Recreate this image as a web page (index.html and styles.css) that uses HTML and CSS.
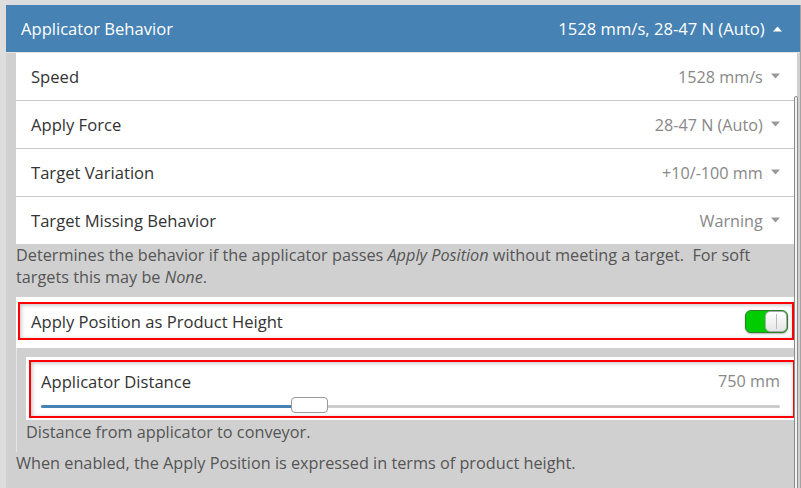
FILE: index.html
```html
<!DOCTYPE html>
<html>
<head>
<meta charset="utf-8">
<link rel="stylesheet" href="styles.css">
</head>
<body>
<div class="panel">
  <div class="header">
    <span class="title">Applicator Behavior</span>
    <span class="summary">1528 mm/s, 28-47 N (Auto) <svg class="caret" width="9" height="6" viewBox="0 0 9 6"><path d="M0 5.5 L4.5 0.5 L9 5.5 Z" fill="#fff"/></svg></span>
  </div>
  <div class="content">
    <div class="rows">
      <div class="row"><span class="label">Speed</span><span class="value">1528 mm/s <svg class="caret" width="9" height="6" viewBox="0 0 9 6"><path d="M0 0.5 L9 0.5 L4.5 5.5 Z" fill="#999"/></svg></span></div>
      <div class="row"><span class="label">Apply Force</span><span class="value">28-47 N (Auto) <svg class="caret" width="9" height="6" viewBox="0 0 9 6"><path d="M0 0.5 L9 0.5 L4.5 5.5 Z" fill="#999"/></svg></span></div>
      <div class="row"><span class="label">Target Variation</span><span class="value">+10/-100 mm <svg class="caret" width="9" height="6" viewBox="0 0 9 6"><path d="M0 0.5 L9 0.5 L4.5 5.5 Z" fill="#999"/></svg></span></div>
      <div class="row last"><span class="label">Target Missing Behavior</span><span class="value">Warning <svg class="caret" width="9" height="6" viewBox="0 0 9 6"><path d="M0 0.5 L9 0.5 L4.5 5.5 Z" fill="#999"/></svg></span></div>
    </div>
    <p class="desc">Determines the behavior if the applicator passes <em>Apply Position</em> without meeting a target.&nbsp; For soft targets this may be <em>None</em>.</p>
    <div class="card toggle-card">
      <div class="hl toggle-row">
        <span class="label">Apply Position as Product Height</span>
        <span class="toggle"><span class="knob"></span></span>
      </div>
    </div>
    <div class="nested">
      <div class="card slider-card">
        <div class="hl slider-box">
          <div class="slider-head"><span class="label">Applicator Distance</span><span class="value">750 mm</span></div>
          <div class="track"><div class="fill" style="width: 34%"></div><div class="thumb" style="left: 34%"></div></div>
        </div>
      </div>
      <p class="desc nested-desc">Distance from applicator to conveyor.</p>
    </div>
    <p class="desc">When enabled, the Apply Position is expressed in terms of product height.</p>
  </div>
  <div class="scrollbar"></div>
</div>
</body>
</html>
```

FILE: styles.css
```css
html, body {
  margin: 0;
  padding: 0;
  height: 100%;
  overflow: hidden;
}
body {
  background: #dddddd;
  font-family: "Open Sans", "Noto Sans", sans-serif;
}
.panel {
  position: relative;
  margin: 5px 0 0 6px;
  width: 794px;
  height: 500px;
  border-right: 1px solid #a3a3a3;
  background: #d0d0d0;
}
.header {
  height: 47px;
  background: #4682b4;
  color: #fff;
  display: flex;
  align-items: center;
  justify-content: space-between;
  padding: 0 18px 0 15px;
  font-size: 16.6px;
  border-bottom: 1px solid #e4e4e4;
}
.caret {
  display: inline-block;
  vertical-align: middle;
  margin-left: 4px;
  position: relative;
  top: -2px;
}
.content {
  padding: 0 3px 0 10px;
}
.rows {
  background: #fff;
}
.row {
  height: 47px;
  border-bottom: 1px solid #cccccc;
  display: flex;
  align-items: center;
  justify-content: space-between;
  padding: 0 17px 0 15px;
}
.row.last {
  border-bottom: none;
}
.label {
  color: #333;
  font-size: 16.6px;
}
.value {
  color: #888;
  font-size: 16.2px;
}
.desc {
  margin: 0;
  font-size: 16.25px;
  line-height: 22px;
  color: #555;
}
.rows + .desc {
  margin-bottom: 9px;
}
.card {
  background: #fff;
}
.toggle-card {
  padding: 5px 3px 8px 2px;
}
.hl {
  border: 2px solid #ff0000;
  box-shadow: inset 1px 1px 4px rgba(0, 0, 0, 0.25);
}
.toggle-row {
  height: 34px;
  display: flex;
  align-items: center;
  justify-content: space-between;
  padding: 0 4px 0 11px;
}
.toggle {
  position: relative;
  width: 41px;
  height: 21px;
  background: #00cc00;
  border: 1px solid #2d7f2d;
  border-radius: 6px;
  box-shadow: 0 1px 2px rgba(0, 0, 0, 0.3);
}
.knob {
  position: absolute;
  right: 0;
  top: 0;
  width: 20px;
  height: 19px;
  background: linear-gradient(#ffffff, #e6e6e6);
  border: 1px solid #aaa;
  border-radius: 5px;
}
.knob::after {
  content: "";
  position: absolute;
  left: 10px;
  top: 2px;
  bottom: 2px;
  width: 1px;
  background: #bbb;
}
.nested {
  margin-top: 0;
  border-left: 1px solid #e6e6e6;
  padding: 9px 0 9px 9px;
}
.slider-card {
  padding: 3px 2px 2px 3px;
}
.slider-box {
  height: 54px;
  padding: 0 13px 0 10px;
}
.slider-head {
  display: flex;
  justify-content: space-between;
  align-items: center;
  height: 30px;
  padding-top: 4px;
}
.track {
  position: relative;
  height: 3px;
  background: #cccccc;
  margin-top: 9px;
  border-radius: 2px;
}
.fill {
  height: 3px;
  background: #4682b4;
  border-radius: 2px;
}
.thumb {
  position: absolute;
  top: -8px;
  width: 35px;
  height: 14px;
  margin-left: -1px;
  background: #fff;
  border: 1px solid #999;
  border-radius: 4px;
}
.nested-desc {
  margin-top: 1px;
}
.scrollbar {
  position: absolute;
  right: 2px;
  top: 91px;
  width: 2px;
  height: 420px;
  border: 1px solid #8c8c8c;
  border-radius: 2px;
  background: #f2f2f2;
}
```
